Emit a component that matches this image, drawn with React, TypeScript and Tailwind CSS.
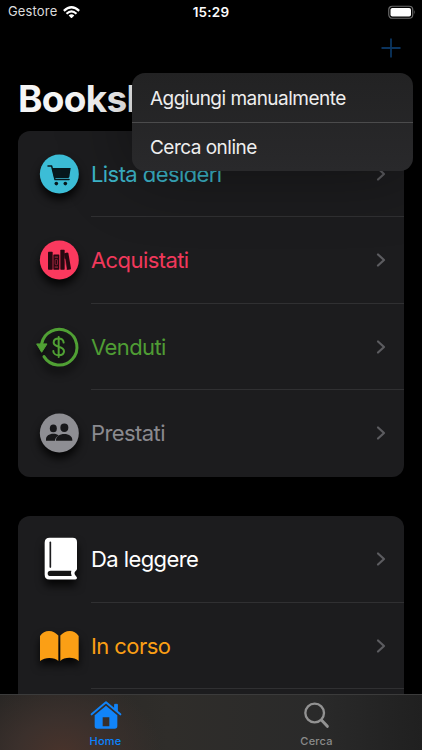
import React from 'react';

type Shelf = {
  label: string;
  color: string;
  icon: React.ReactNode;
};

function CartIcon() {
  return (
    <svg viewBox="45 53.25 156 156" className="size-[52px] drop-shadow-[0_6px_4px_rgba(0,0,0,0.85)]">
      <circle cx="124" cy="131" r="58.5" fill="#3cbdd6" />
      <path d="M90 107.500h11l10 40.500h42" fill="none" stroke="#07181c" strokeWidth="4.500" strokeLinecap="round" strokeLinejoin="round" />
      <path d="M102 113h56l-4 27q-1 3-4 3h-38q-3 0-4-3z" fill="#07181c" />
      <circle cx="115" cy="160" r="5.500" fill="#07181c" />
      <circle cx="142" cy="160" r="5.500" fill="#07181c" />
    </svg>
  );
}

function BooksIcon() {
  return (
    <svg viewBox="45 312.75 156 156" className="size-[52px] drop-shadow-[0_6px_4px_rgba(0,0,0,0.85)]">
      <circle cx="124" cy="391" r="58.500" fill="#fb395e" />
      <g fill="#260810">
        <rect x="90" y="366" width="14" height="54" rx="2" />
        <rect x="106" y="374" width="18" height="46" rx="2" />
        <rect x="127" y="360" width="13" height="60" rx="2" />
        <path d="M138 371l9-3q3 0 4 2l8 46q0 3-3 3l-10 2z" />
      </g>
      <path d="M110 382h10M110 412h10" stroke="#fb395e" strokeWidth="2" />
      <rect x="111.500" y="389" width="7" height="16" rx="2" fill="none" stroke="#b52a46" strokeWidth="2" />
      <path d="M141 387l5 33" stroke="#fb395e" strokeWidth="2" />
    </svg>
  );
}

function SoldIcon() {
  return (
    <svg viewBox="45 62.25 156 156" className="size-[52px] drop-shadow-[0_6px_4px_rgba(0,0,0,0.85)]">
      <path d="M71 130A53.500 53.500 0 1 1 78 169" fill="none" stroke="#50a034" strokeWidth="9" strokeLinecap="round" />
      <path d="M56 131h31L71 156z" fill="#50a034" stroke="#50a034" strokeWidth="3" strokeLinejoin="round" />
      <path d="M137 127c-1-8-7-12-15-12s-15 4-15 12c0 17 31 8 31 26 0 8-7 12-16 12s-16-5-16-13M122 110v60" fill="none" stroke="#50a034" strokeWidth="6" strokeLinecap="round" />
    </svg>
  );
}

function PeopleIcon() {
  return (
    <svg viewBox="45 321.75 156 156" className="size-[52px] drop-shadow-[0_6px_4px_rgba(0,0,0,0.85)]">
      <circle cx="124" cy="400" r="58.500" fill="#8e8e93" />
      <g fill="#171719">
        <ellipse cx="106" cy="386" rx="10.500" ry="11.500" />
        <ellipse cx="139" cy="384" rx="12" ry="12.500" />
        <path d="M84 423v-4c0-10 9-17 22-17 7 0 12 2 16 5-7 4-11 9-11 16z" />
        <path d="M114 423c-1-13 11-20 25-20s25 7 24 20z" />
      </g>
    </svg>
  );
}

function ClosedBookIcon() {
  return (
    <svg viewBox="45 69.75 156 156" className="size-[52px] drop-shadow-[0_6px_4px_rgba(0,0,0,0.85)]">
      <path d="M95 84h69q13 0 13 13v80q0 4-4 7-7 6 0 14 4 4 4 6 0 5-5 5H94q-14 0-14-15V99q0-15 15-15z" fill="#fff" />
      <path d="M160 183q-3 8 1 16H98q-9 0-9-8t9-8z" fill="#151515" />
      <path d="M97 98v74" stroke="#1c1c1e" strokeWidth="5" strokeLinecap="round" />
    </svg>
  );
}

function OpenBookIcon() {
  return (
    <svg viewBox="45 329.25 156 156" className="size-[52px] drop-shadow-[0_6px_4px_rgba(0,0,0,0.85)]">
      <path d="M66 452v-75c7-10 16-15 27-15s20 5 28 14v76c-9-10-38-14-55 0z" fill="#fb9f15" />
      <path d="M127 452v-76c8-9 17-14 28-14s20 5 27 15v75c-15-14-45-11-55 0z" fill="#fb9f15" />
    </svg>
  );
}

const collection: Shelf[] = [
  { label: 'Lista desideri', color: 'text-[#3cb6ca]', icon: <CartIcon /> },
  { label: 'Acquistati', color: 'text-[#f1385b]', icon: <BooksIcon /> },
  { label: 'Venduti', color: 'text-[#4f9d34]', icon: <SoldIcon /> },
  { label: 'Prestati', color: 'text-[#8a8a8f]', icon: <PeopleIcon /> },
];

const reading: Shelf[] = [
  { label: 'Da leggere', color: 'text-white', icon: <ClosedBookIcon /> },
  { label: 'In corso', color: 'text-[#fb9f15]', icon: <OpenBookIcon /> },
];

function ShelfRow({ shelf, divider }: { shelf: Shelf; divider: boolean }) {
  return (
    <div className="flex h-[86.5px] items-stretch pl-[15px]">
      <div className="flex w-[58px] shrink-0 items-center">{shelf.icon}</div>
      <div className={`flex flex-1 items-center justify-between pr-[18px] border-b ${divider ? 'border-[#303032]' : 'border-transparent'}`}>
        <span className={`pt-0.5 text-[22px] tracking-[-0.58px] ${shelf.color}`}>{shelf.label}</span>
        <svg viewBox="0 0 10 16" className="mt-px h-4 w-2.5" fill="none" stroke="#5c5c60" strokeWidth="2.2" strokeLinecap="round" strokeLinejoin="round">
          <path d="M2 2.500 8 8 2 13.500" />
        </svg>
      </div>
    </div>
  );
}

function StatusBar() {
  return (
    <div className="grid h-6 grid-cols-3 items-center text-[13px] text-white">
      <div className="flex items-center gap-1.5 pl-2">
        <span className="tracking-[0.15px] text-[#dcdcdc]">Gestore</span>
        <svg viewBox="0 0 51 38" className="h-[12.700px] w-[17px]" fill="none" stroke="#fff" strokeWidth="6.500">
          <path d="M2.500 14.500Q25.500-7 48.500 14.500" />
          <path d="M10.500 23Q25.500 9 40.500 23" />
          <path d="M17 28.500Q25.500 21 34 28.500L25.500 37z" fill="#fff" stroke="none" />
        </svg>
      </div>
      <div className="text-center text-[13.5px] font-semibold tracking-[0.2px]">15:29</div>
      <div className="flex justify-end pr-1.5">
        <svg viewBox="0 0 28 14" className="mb-px h-3.5 w-7">
          <rect x="0.75" y="1.250" width="24" height="12" rx="3.500" fill="none" stroke="#6b6b6b" strokeWidth="1.200" />
          <rect x="2.500" y="2.900" width="20.500" height="8.700" rx="1.800" fill="#fff" />
          <path d="M26 5q1.600 2.200 0 4.500z" fill="#6b6b6b" />
        </svg>
      </div>
    </div>
  );
}

function AddMenu() {
  return (
    <div className="absolute top-[73px] left-[132px] h-[98px] w-[281px] overflow-hidden rounded-[13px] bg-linear-to-b from-[#222223] to-[#29292b] text-[19px] tracking-[-0.52px] text-[#eeeeee] shadow-[0_0_70px_rgba(0,0,0,0.4)]">
      <div className="flex h-[49.5px] items-center border-b border-[#4b4b4c] pt-[3px] pl-[18px]">Aggiungi manualmente</div>
      <div className="flex h-[48.5px] items-center pt-0.5 pl-[18px]">Cerca online</div>
    </div>
  );
}

function TabBar() {
  return (
    <nav className="flex h-14 shrink-0 border-t border-[#3b3b3b] bg-[radial-gradient(ellipse_100px_80px_at_62px_60px,#49332b_0%,#3b302c_45%,transparent_100%),linear-gradient(90deg,#282624_0%,#2f2d2a_40%,#2a2a2a_75%,#202020_100%)] text-[11px] font-medium tracking-[0.2px]">
      <div className="flex flex-1 flex-col items-center text-[#0a84ff]">
        <svg viewBox="0 0 96 90" className="mt-[5px] h-[30px] w-8">
          <path d="M5 43 48 7 91 43" fill="none" stroke="#1184f9" strokeWidth="6" strokeLinecap="round" strokeLinejoin="round" />
          <path d="M74 13h8v21l-8-7z" fill="#1184f9" stroke="#1184f9" strokeWidth="3" strokeLinejoin="round" />
          <path fillRule="evenodd" d="M14 46 48 17l34 29v32q0 8-8 8H22q-8 0-8-8zM38 52v27h20V52z" fill="#1184f9" />
        </svg>
        <span className="mt-1 leading-[14px]">Home</span>
      </div>
      <div className="flex flex-1 flex-col items-center text-[#8b8b8b]">
        <svg viewBox="0 0 90 90" className="mt-[5px] size-[30px]" fill="none" stroke="#929292" strokeLinecap="round">
          <circle cx="38" cy="39" r="28" strokeWidth="7" />
          <path d="M59 61 76 79" strokeWidth="9" />
        </svg>
        <span className="mt-1 leading-[14px]">Cerca</span>
      </div>
    </nav>
  );
}

export default function App() {
  return (
    <div className="relative flex h-[750px] w-[422px] flex-col overflow-hidden bg-black font-['Inter','Liberation_Sans',sans-serif]">
      <StatusBar />
      <div className="flex h-12 items-center justify-end pr-[21px]">
        <svg viewBox="0 0 20 20" className="size-5" stroke="#0c3966" strokeWidth="1.800">
          <path d="M10 .5v19M.5 10h19" />
        </svg>
      </div>
      <h1 className="h-[58.5px] shrink-0 pt-1 pl-[18px] text-[37px] leading-[46px] font-bold tracking-[-0.7px] text-[#f5f5f5]">Bookshelf</h1>
      <main className="flex min-h-0 flex-1 flex-col gap-[39.5px] overflow-hidden pr-[18px] pl-[18px]">
        <section className="shrink-0 rounded-xl bg-[#1c1c1e]">
          {collection.map((shelf, i) => (
            <ShelfRow key={shelf.label} shelf={shelf} divider={i < collection.length - 1} />
          ))}
        </section>
        <section className="h-[200px] shrink-0 rounded-t-xl bg-[#1c1c1e]">
          {reading.map((shelf) => (
            <ShelfRow key={shelf.label} shelf={shelf} divider />
          ))}
        </section>
      </main>
      <TabBar />
      <AddMenu />
    </div>
  );
}
